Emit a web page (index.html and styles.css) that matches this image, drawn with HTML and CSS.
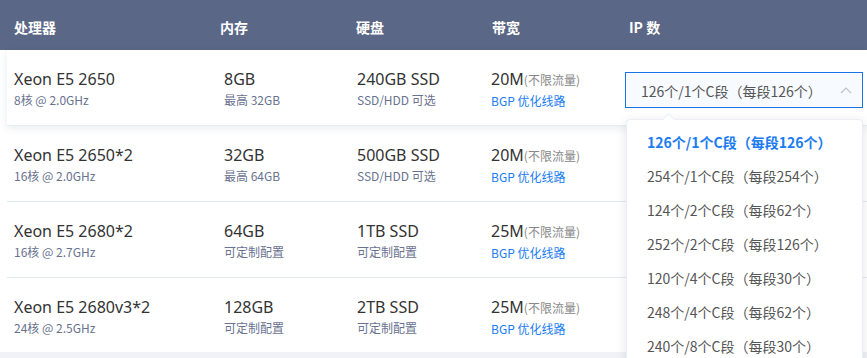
FILE: index.html
```html
<!DOCTYPE html>
<html lang="zh-CN">
<head>
<meta charset="utf-8">
<title>服务器配置</title>
<link rel="stylesheet" href="styles.css">
</head>
<body>
<div class="table">
  <div class="thead">
    <div class="th">处理器</div>
    <div class="th th-mem">内存</div>
    <div class="th">硬盘</div>
    <div class="th">带宽</div>
    <div class="th th-ip">IP 数</div>
  </div>
  <div class="tbody">
    <div class="row row-active">
      <div class="cell"><div class="main">Xeon E5 2650</div><div class="sub">8核 @ 2.0GHz</div></div>
      <div class="cell"><div class="main">8GB</div><div class="sub">最高 32GB</div></div>
      <div class="cell"><div class="main">240GB SSD</div><div class="sub">SSD/HDD 可选</div></div>
      <div class="cell"><div class="main">20M<span class="note">(不限流量)</span></div><div class="sub sub-blue">BGP 优化线路</div></div>
      <div class="cell cell-ip">
        <div class="select">
          <span class="select-text">126个/1个C段（每段126个）</span>
          <svg class="chev" width="12" height="7" viewBox="0 0 12 7"><path d="M1 6 L6 1 L11 6" fill="none" stroke="#c0c4cc" stroke-width="1.2"/></svg>
        </div>
        <div class="dropdown">
          <div class="caret"></div>
          <div class="opt opt-selected">126个/1个C段（每段126个）</div>
          <div class="opt">254个/1个C段（每段254个）</div>
          <div class="opt">124个/2个C段（每段62个）</div>
          <div class="opt">252个/2个C段（每段126个）</div>
          <div class="opt">120个/4个C段（每段30个）</div>
          <div class="opt">248个/4个C段（每段62个）</div>
          <div class="opt">240个/8个C段（每段30个）</div>
        </div>
      </div>
    </div>
    <div class="row">
      <div class="cell"><div class="main">Xeon E5 2650*2</div><div class="sub">16核 @ 2.0GHz</div></div>
      <div class="cell"><div class="main">32GB</div><div class="sub">最高 64GB</div></div>
      <div class="cell"><div class="main">500GB SSD</div><div class="sub">SSD/HDD 可选</div></div>
      <div class="cell"><div class="main">20M<span class="note">(不限流量)</span></div><div class="sub sub-blue">BGP 优化线路</div></div>
      <div class="cell"></div>
    </div>
    <div class="row">
      <div class="cell"><div class="main">Xeon E5 2680*2</div><div class="sub">16核 @ 2.7GHz</div></div>
      <div class="cell"><div class="main">64GB</div><div class="sub">可定制配置</div></div>
      <div class="cell"><div class="main">1TB SSD</div><div class="sub">可定制配置</div></div>
      <div class="cell"><div class="main">25M<span class="note">(不限流量)</span></div><div class="sub sub-blue">BGP 优化线路</div></div>
      <div class="cell"></div>
    </div>
    <div class="row row-last">
      <div class="cell"><div class="main">Xeon E5 2680v3*2</div><div class="sub">24核 @ 2.5GHz</div></div>
      <div class="cell"><div class="main">128GB</div><div class="sub">可定制配置</div></div>
      <div class="cell"><div class="main">2TB SSD</div><div class="sub">可定制配置</div></div>
      <div class="cell"><div class="main">25M<span class="note">(不限流量)</span></div><div class="sub sub-blue">BGP 优化线路</div></div>
      <div class="cell"></div>
    </div>
  </div>
</div>
</body>
</html>
```

FILE: styles.css
```css
html, body {
  margin: 0;
  padding: 0;
  overflow: hidden;
  height: 100%;
}
body {
  background: #f0f2f7;
  font-family: "Noto Sans CJK SC", "Noto Sans", sans-serif;
  color: #333;
}
.table {
  background: #fff;
}
.thead {
  height: 50px;
  background: #5b6786;
  display: grid;
  grid-template-columns: 206px 136px 136px 136px 1fr;
  padding-left: 14px;
  align-items: center;
  box-sizing: border-box;
  padding-top: 3px;
}
.th {
  color: #fff;
  font-size: 14px;
  font-weight: 700;
  line-height: 20px;
}
.th-ip {
  padding-left: 1px;
}
.tbody {
  padding-left: 7px;
  background: #fff;
}
.row {
  display: grid;
  grid-template-columns: 210px 133px 134px 134px 1fr;
  padding-left: 7px;
  height: 76px;
  box-sizing: border-box;
  padding-top: 19px;
  border-bottom: 1px solid #e4e8f0;
  position: relative;
}
.row-active {
  box-shadow: 0 2px 8px rgba(40, 60, 100, 0.10);
  border-bottom-color: #e8ecf3;
  z-index: 2;
}
.row-last {
  border-bottom: none;
  height: 74px;
}
.main {
  font-family: "Noto Sans", "Noto Sans CJK SC", sans-serif;
  font-size: 16px;
  line-height: 20px;
  color: #333;
  white-space: nowrap;
}
.note {
  font-family: "Noto Sans CJK SC", sans-serif;
  font-size: 12px;
  color: #888;
}
.sub {
  margin-top: 2px;
  font-size: 12px;
  line-height: 18px;
  color: #697290;
  white-space: nowrap;
}
.sub-blue {
  color: #1a7cf0;
}
.cell-ip {
  position: relative;
}
.select {
  margin-top: 3px;
  width: 238px;
  height: 36px;
  box-sizing: border-box;
  border: 1px solid #1a73e8;
  background: #f7faff;
  display: flex;
  align-items: center;
  justify-content: space-between;
  padding: 0 10px 0 15px;
}
.select-text {
  font-size: 14px;
  color: #555;
  line-height: 20px;
  padding-top: 1px;
}
.chev {
  display: block;
}
.dropdown {
  position: absolute;
  left: 1px;
  top: 50px;
  width: 237px;
  background: #fff;
  border: 1px solid #ebeef5;
  border-radius: 4px;
  box-shadow: 0 2px 12px rgba(0, 0, 0, 0.10);
  padding-top: 5px;
  box-sizing: border-box;
  z-index: 5;
}
.caret {
  position: absolute;
  top: -5px;
  left: 37px;
  width: 8px;
  height: 8px;
  background: #fff;
  border-left: 1px solid #ebeef5;
  border-top: 1px solid #ebeef5;
  transform: rotate(45deg);
}
.opt {
  height: 34px;
  line-height: 34px;
  padding-left: 20px;
  font-size: 14px;
  color: #555;
  white-space: nowrap;
}
.opt-selected {
  color: #1a7cf0;
  font-weight: 700;
}
```
